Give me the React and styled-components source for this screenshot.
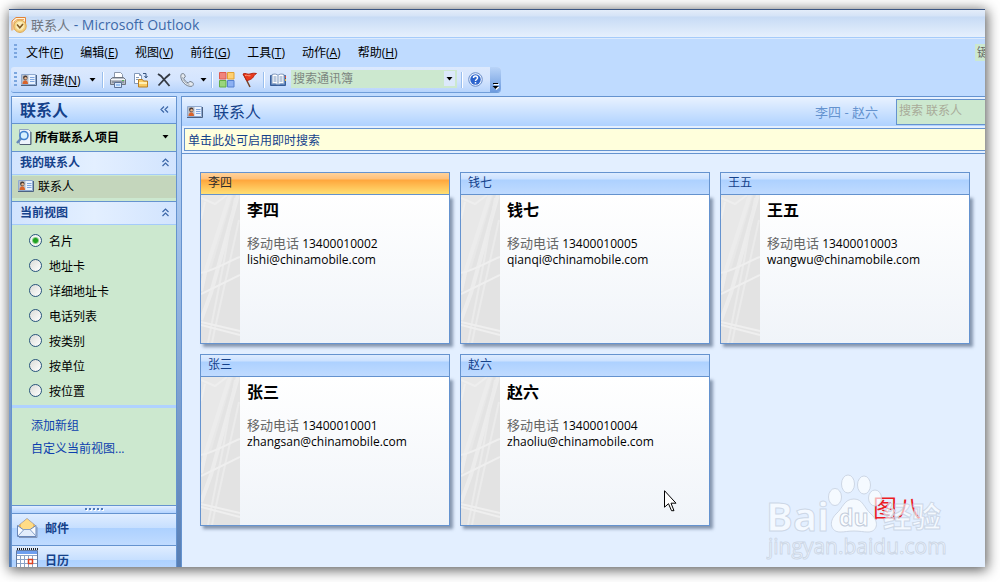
import React, { useState } from "react";
import styled, { createGlobalStyle } from "styled-components";

const GlobalStyle = createGlobalStyle`
  * {
    box-sizing: border-box;
  }
  body {
    margin: 0;
    background: #fff;
    font-family: "Open Sans", "Noto Sans CJK SC", sans-serif;
    font-size: 12px;
    color: #000;
  }
  button, input {
    font: inherit;
    color: inherit;
    border: 0;
    padding: 0;
    margin: 0;
    background: none;
  }
  svg {
    display: block;
    flex: none;
  }
`;

const Page = styled.div`
  height: 100vh;
  padding: 9px 15px 15px 9px;
`;

const Window = styled.div`
  position: relative;
  display: flex;
  flex-direction: column;
  height: 100%;
  background: #bfdbff;
  border-top: 1px solid #3b5683;
  box-shadow: 1px 2px 12px 1px rgba(0, 0, 0, 0.65);
`;

const TitleBar = styled.header`
  display: flex;
  align-items: center;
  gap: 4px;
  height: 28px;
  padding: 2px 2px 0;
  background: linear-gradient(#e4edfa 0, #d5e3f7 6px, #c7dbf5 7px, #e6f0fd 100%);
  border-bottom: 1px solid #a5cbfa;
  color: #3e6aaa;
  font-size: 14px;
  span {
    color: #6f7681;
    font-size: 13px;
  }
`;

const MenuBar = styled.nav`
  display: flex;
  align-items: center;
  gap: 1px;
  height: 29px;
  padding: 0 0 2px 5px;
  border-top: 1px solid #dceafd;
`;

const MenuButton = styled.button`
  padding: 0 8px;
`;

const Grip = styled.span`
  width: 3px;
  height: 16px;
  background: repeating-linear-gradient(#7ba6df 0 2px, transparent 2px 4px);
`;

const QuestionBox = styled.input`
  width: 10px;
  height: 17px;
  margin-left: auto;
  padding-left: 2px;
  background: #cce8cf;
  &::placeholder {
    color: #666;
  }
`;

const ToolBar = styled.div`
  display: flex;
  align-items: center;
  align-self: flex-start;
  height: 26px;
  margin: 0 0 3px 2px;
  padding-left: 3px;
  background: linear-gradient(#dce9fd, #d5e5fe 50%, #b7d4fc);
  border-bottom: 1px solid #6f9dd9;
  border-radius: 3px 4px 4px 3px;
`;

const ToolButton = styled.button`
  display: flex;
  align-items: center;
  justify-content: center;
  gap: 3px;
  min-width: ${props => props.$width || 23}px;
  height: 22px;
`;

const Separator = styled.span`
  width: 2px;
  height: 16px;
  margin: 0 2px;
  border-left: 1px solid #9abfee;
  border-right: 1px solid #fff;
`;

const Combo = styled.div`
  display: flex;
  align-items: center;
  width: 166px;
  height: 18px;
  margin: 0 2px 2px 3px;
  padding: 1px 2px;
  background: #cce8cf;
  input {
    flex: 1;
    min-width: 0;
    height: 16px;
  }
  input::placeholder {
    color: #7c8680;
  }
  button {
    display: flex;
    align-items: center;
    justify-content: center;
    width: 11px;
    height: 15px;
    background: #dce9fb;
  }
`;

const ToolEnd = styled.button`
  display: flex;
  align-items: flex-end;
  justify-content: center;
  width: 11px;
  height: 25px;
  margin-left: 4px;
  padding-bottom: 2px;
  background: linear-gradient(#b9d4f8, #6c9ade);
  border-radius: 0 4px 4px 0;
`;

const Body = styled.div`
  display: flex;
  flex: 1;
  gap: 4px;
  min-height: 0;
  padding-left: 2px;
  overflow: hidden;
  background: linear-gradient(#bfdbff, #577eb4);
`;

/* the last navigation button runs past the bottom of the window */
const Sidebar = styled.aside`
  display: flex;
  flex-direction: column;
  width: 166px;
  margin-bottom: -11px;
  border: 1px solid #6593cf;
  background: #cce8cf;
`;

const SideTitle = styled.div`
  display: flex;
  align-items: center;
  justify-content: space-between;
  height: 27px;
  padding: 0 7px 3px 8px;
  background: linear-gradient(#e3efff, #afd2ff);
  border-bottom: 1px solid #6593cf;
  border-top: 1px solid #fff;
  color: #15428b;
  font-size: 16px;
  font-weight: 700;
`;

const ScopeButton = styled.button`
  display: flex;
  align-items: center;
  gap: 3px;
  height: 28px;
  padding: 0 7px 2px 4px;
  border-bottom: 1px solid #6593cf;
  font-weight: 700;
  svg:last-child {
    margin-left: auto;
  }
`;

const Section = styled.div`
  display: flex;
  align-items: center;
  justify-content: space-between;
  height: 23px;
  padding: 0 6px 2px 8px;
  background: linear-gradient(90deg, #d2e4fe, #e3efff 50%, #d2e4fe);
  border-bottom: 1px solid #a5cbfa;
  color: #15428b;
  font-weight: 700;
`;

const Folder = styled.a`
  display: flex;
  align-items: center;
  gap: 4px;
  height: 22px;
  margin: 1px 0 3px;
  padding: 0 0 2px 6px;
  background: #c4d6bc;
  color: #000;
  text-decoration: none;
`;

const Line = styled.div`
  height: ${props => props.$size || 1}px;
  background: ${props => props.$color || "#6593cf"};
`;

const Views = styled.div`
  padding: 3px 0 2px 17px;
`;

const View = styled.label`
  display: flex;
  align-items: center;
  gap: 7px;
  height: 25px;
`;

const Radio = styled.input.attrs({ type: "radio" })`
  appearance: none;
  width: 13px;
  height: 13px;
  border: 1px solid #28537c;
  border-radius: 50%;
  background: linear-gradient(135deg, #dcdcd8, #fff);
  &:checked {
    background: radial-gradient(circle, #21a121 0 2px, #8ccf8a 3px, #f4f6f2 4px);
  }
`;

const SideLinks = styled.div`
  flex: 1;
  padding: 6px 0 0 19px;
  a {
    display: block;
    line-height: 23px;
    color: #0d3fae;
    text-decoration: none;
  }
`;

const Splitter = styled.div`
  display: flex;
  align-items: center;
  justify-content: center;
  height: 8px;
  background: linear-gradient(#e3efff, #b3d3ff);
  border-top: 1px solid #6593cf;
`;

const NavButton = styled.button`
  display: flex;
  align-items: center;
  gap: 6px;
  height: 32px;
  padding: 0 0 4px 4px;
  background: linear-gradient(#e0edff, #c6dfff 45%, #add1ff 46%, #c0dbff);
  border-top: 1px solid #6593cf;
  color: #15428b;
  font-weight: 700;
`;

const Main = styled.main`
  position: relative;
  display: flex;
  flex: 1;
  flex-direction: column;
  min-width: 0;
  background: #e3efff;
  border: solid #6593cf;
  border-width: 1px 0 0 1px;
`;

const MainHeader = styled.div`
  display: flex;
  align-items: center;
  height: 29px;
  padding-left: 5px;
  background: linear-gradient(#e9f2ff, #afd2ff);
  h1 {
    flex: 1;
    margin: 0 0 2px 10px;
    color: #15428b;
    font-size: 16px;
    font-weight: 400;
  }
`;

const Range = styled.span`
  color: #6593cf;
  font-size: 13px;
`;

const SearchBox = styled.input`
  width: 89px;
  height: 26px;
  margin-left: 18px;
  padding: 0 2px 2px;
  background: #cce8cf;
  border: solid #6593cf;
  border-width: 1px 0 1px 1px;
  &::placeholder {
    color: #a9ab99;
  }
`;

const Notice = styled.button`
  height: 23px;
  margin: 2px 0 2px 2px;
  padding-left: 3px;
  background: #ffffdc;
  border: solid #6593cf;
  border-width: 1px 0 1px 1px;
  color: #15428b;
  text-align: left;
`;

const Cards = styled.div`
  display: grid;
  grid-template-columns: repeat(auto-fill, 250px);
  gap: 10px;
  padding: 18px 0 0 18px;
`;

const Card = styled.article`
  display: flex;
  flex-direction: column;
  height: 172px;
`;

const CardTitle = styled.div`
  height: 23px;
  padding-left: 7px;
  line-height: 19px;
  border: 1px solid #6593cf;
  color: ${props => (props.$active ? "#2b2b2b" : "#15428b")};
  background: ${props =>
    props.$active
      ? "linear-gradient(#ffd29b, #ffc07a 6px, #ffa63c 7px, #ffdf74)"
      : "linear-gradient(#deecff, #cbe1ff 6px, #add1ff 7px, #c0dbff)"};
`;

const CardBody = styled.div`
  display: flex;
  flex: 1;
  gap: 7px;
  background: linear-gradient(#fff, #f0f4f9);
  border: solid #6593cf;
  border-width: 0 1px 1px;
  box-shadow: 3px 3px 3px rgba(70, 90, 120, 0.6);
`;

const CardText = styled.div`
  padding-top: 3px;
  h2 {
    margin: 0 0 13px;
    font-size: 16px;
    line-height: 24px;
  }
  p {
    margin: 0;
    line-height: 16px;
  }
  span {
    color: #666;
    font-size: 13px;
  }
`;

const Pointer = styled.div`
  position: absolute;
  right: 308px;
  bottom: 55px;
`;

const Watermark = styled.div`
  position: absolute;
  right: 35px;
  bottom: 4px;
`;

const ContactIcon = () => (
  <svg width="16" height="14" viewBox="0 0 16 14">
    <path d="M.5 1.5h14v10H.5z" fill="#e9f2ff" stroke="#8fa9cf" />
    <path d="M0 12.5h15.500V2" fill="none" stroke="#4c6283" />
    <path d="M1 2h6.500v9H1z" fill="#b9bfc8" />
    <circle cx="4.300" cy="4.700" r="2.200" fill="#4a3a35" />
    <circle cx="4.600" cy="5.200" r="1.200" fill="#e9b48a" />
    <path d="M1.500 11c0-5 5.500-5 5.500 0z" fill="#d9632b" />
    <path d="M9 4.500h4.500M9 6.500h4.500M9 8.500h4.500" stroke="#7fa6df" />
  </svg>
);

const AppIcon = () => (
  <svg width="16" height="16" viewBox="0 0 16 16">
    <path d="M1 13.500V4l4-3.500h9.500V7" fill="#fff3d5" stroke="#e0823a" />
    <path d="M3 13V5l3-2.500h7" fill="none" stroke="#eda76c" />
    <circle cx="9" cy="9.200" r="6.200" fill="#f6cf7c" stroke="#dba650" />
    <circle cx="9" cy="8.800" r="4.600" fill="#fdeeb9" stroke="#f4d68a" />
    <path d="M6 7.500l2.800 3.200L12 7" fill="none" stroke="#815a25" strokeWidth="1.600" />
  </svg>
);

const DownArrow = () => (
  <svg width="7" height="4" viewBox="0 0 7 4">
    <path d="M.5 0h6L3.500 3.500z" fill="#000" />
  </svg>
);

const PrinterIcon = () => (
  <svg width="16" height="16" viewBox="0 0 16 16">
    <path d="M4.500 6V.500h6l2 2V6" fill="#fff" stroke="#8b97ab" />
    <path d="M.5 7.500l2-2h11l2 2v5H.500z" fill="#b8bec8" stroke="#6e7580" />
    <path d="M1 7.500h14" stroke="#f4f6f8" />
    <path d="M2 10h12" stroke="#66707e" />
    <path d="M4.500 10.500h7v5h-7z" fill="#d8e9ff" stroke="#5c7297" />
    <path d="M6 13h4" stroke="#5a9be6" />
    <path d="M12 8.500h2" stroke="#52b452" />
  </svg>
);

const MoveIcon = () => (
  <svg width="16" height="16" viewBox="0 0 16 16">
    <path d="M1.500 1.500h5l2 2v8h-7z" fill="#fff" stroke="#8298b8" />
    <path d="M6.500 1.500v2h2M3 5.500h3M3 7.500h2" fill="none" stroke="#8298b8" />
    <path d="M10 1.500h3v4M11.500 4l1.500 2 1.500-2" fill="none" stroke="#375683" />
    <path d="M5.500 7.500h4l1 1.500h4v6h-9z" fill="#f9cb62" stroke="#b77e25" />
    <path d="M6 11h8" stroke="#ffefb4" strokeWidth="2" />
  </svg>
);

const DeleteIcon = () => (
  <svg width="14" height="14" viewBox="0 0 14 14">
    <path d="M1 1l3 2 8.500 10M13 1L9 4.500 1.500 12.500" fill="none" stroke="#343a43" strokeWidth="1.800" />
  </svg>
);

const PhoneIcon = () => (
  <svg width="14" height="14" viewBox="0 0 14 14">
    <path
      d="M1 1.500C2 .3 4 .4 4.600 1.500l.7 2.300-1.600 1.400c.6 2.200 2.500 4 4.600 4.700l1.700-1.500 2.600 1c1.200.9.9 3-.4 3.800C6.500 14.700-.5 7.500 1 1.500z"
      fill="#e5eaf0"
      stroke="#77818e"
    />
    <path d="M2.500 4c.4 3.500 3 6.500 7 7.500" fill="none" stroke="#a9b3bf" />
  </svg>
);

const CategoryIcon = () => (
  <svg width="16" height="16" viewBox="0 0 16 16">
    <path d="M.5.500h6.500v6.500H.500z" fill="#f0857c" stroke="#de5a50" />
    <path d="M8.500.500h6.500v6.500H8.500z" fill="#ffd070" stroke="#e0a233" />
    <path d="M.5 8.500h6.500v6.500H.500z" fill="#9ad67c" stroke="#63ad45" />
    <path d="M8.500 8.500h6.500v6.500H8.500z" fill="#8db1f3" stroke="#5580cf" />
  </svg>
);

const FlagIcon = () => (
  <svg width="16" height="16" viewBox="0 0 16 16">
    <path d="M1.500 2L8 15" stroke="#71462c" strokeWidth="1.500" />
    <path d="M1 2c3-1.500 4 1 7 0s4-.8 6.500-.5c-2.500 1.200-2.500 3-4 4.500s-3 1.500-5.500 3z" fill="#ea3a1e" stroke="#b52411" />
    <path d="M3 3.500c2-.8 3 .8 5.500.2" fill="none" stroke="#ff9c79" />
  </svg>
);

const BookIcon = () => (
  <svg width="16" height="14" viewBox="0 0 16 14">
    <path d="M.5 2.500h15v10H.500z" fill="#527bb8" stroke="#375d99" />
    <path d="M2 1.500c3-1 5-.2 6 .8 1-1 3-1.800 6-.8v9.500c-3-.8-5 0-6 1-1-1-3-1.800-6-1z" fill="#fff" stroke="#7f98be" />
    <path d="M8 2.500V12M3.500 4h3M3.500 6h3M3.500 8h3M9.500 4h3M9.500 6h3M9.500 8h3" stroke="#7391bd" />
    <path d="M15.500 3v2" stroke="#e24a33" />
    <path d="M15.500 6v2" stroke="#f0bd39" />
  </svg>
);

const HelpIcon = () => (
  <svg width="15" height="15" viewBox="0 0 15 15">
    <circle cx="7.500" cy="7.500" r="6.800" fill="#e8f1ff" stroke="#6b8ec9" />
    <circle cx="7.500" cy="7.500" r="5.200" fill="#2c64cd" />
    <path d="M5.500 6c0-2.700 4-2.700 4 0 0 1.500-2 1.500-2 3M7.500 10v1.500" fill="none" stroke="#fff" strokeWidth="1.500" />
  </svg>
);

const MoreIcon = () => (
  <svg width="7" height="7" viewBox="0 0 7 7">
    <path d="M1 .5h5" stroke="#000" />
    <path d="M2 1.500h5" stroke="#fff" />
    <path d="M1.500 4h6L4.500 7z" fill="#fff" />
    <path d="M.5 3h6l-3 3z" fill="#000" />
  </svg>
);

const FindIcon = () => (
  <svg width="16" height="16" viewBox="0 0 16 16">
    <path d="M3.500.500h9l2 2v13h-11z" fill="#edf3fc" stroke="#8fa3c1" />
    <path d="M15 3v12.500H4" fill="none" stroke="#4e5c72" />
    <path d="M1 14l4.500-5" stroke="#6489b9" strokeWidth="2.500" />
    <circle cx="8" cy="6.500" r="4" fill="#d5f0ff" stroke="#3f80ce" strokeWidth="1.600" />
  </svg>
);

const Chevrons = ({ up }) => (
  <svg width="9" height="9" viewBox="0 0 9 9">
    <path
      d={up ? "M1.500 4L4.500 1l3 3M1.500 8L4.500 5l3 3" : "M4 1.500L1 4.500l3 3M8 1.500L5 4.500l3 3"}
      fill="none"
      stroke="#3c67a8"
      strokeWidth="1.200"
    />
  </svg>
);

const Dots = () => (
  <svg width="19" height="4" viewBox="0 0 19 4">
    <path d="M1 2h18" stroke="#fff" strokeWidth="2" strokeDasharray="2 2" />
    <path d="M0 1h18" stroke="#4d79b8" strokeWidth="2" strokeDasharray="2 2" />
  </svg>
);

const MailIcon = () => (
  <svg width="23" height="22" viewBox="0 0 23 22">
    <path d="M2.500 8.500L11 1.500l8.500 7v11h-17z" fill="#f4bc54" stroke="#a6a6b2" />
    <path d="M5 7l6-5 6 5v7H5z" fill="#ffdc86" />
    <path d="M1.500 8.500l9 6.500 9.500-6.500v11H1.500z" fill="#f8fbff" stroke="#6886b8" />
    <path d="M2 19l6-6.500h6l6 6.500" fill="#e3edfb" stroke="#849fc8" />
    <path d="M3 20.500h18V10" fill="none" stroke="#8296b9" />
  </svg>
);

const CalendarIcon = () => (
  <svg width="23" height="23" viewBox="0 0 23 23">
    <path d="M.5 2.500h21v20H.500z" fill="#fff" stroke="#647a9e" />
    <path d="M1 3h20v3H1z" fill="#6e9ff0" />
    <path d="M1 1h21" stroke="#222" strokeWidth="2" strokeDasharray="1 1" />
    <path d="M1 7.500h20M1 11.500h20M1 15.500h20M1 19.500h20M4.500 7v15M8.500 7v15M12.500 7v15M16.500 7v15" stroke="#8ba2c5" />
    <path d="M12.500 11.500h4v4h-4z" fill="#fff" stroke="#e0401f" strokeWidth="1.500" />
  </svg>
);

const CardStrip = () => (
  <svg width="39" height="148" viewBox="0 0 39 148">
    <path d="M0 0h39v148H0z" fill="#e3e3e3" />
    <path d="M0 0h32L10 75 0 78z" fill="#e8e8e8" />
    <path d="M0 3l14 6L26 0M4 7L0 24" fill="none" stroke="#eeeeee" strokeWidth="2" />
    <path d="M29 0L4 78 0 96M37 0L10 98 0 125" fill="none" stroke="#ececec" strokeWidth="4" />
    <path d="M34 3L23 66 7 148M38 25L13 138 11 148" fill="none" stroke="#ebebeb" strokeWidth="2" />
    <path d="M0 78C14 75 26 67 39 62M0 99l39-19M0 127l39 9M0 130l39 10" fill="none" stroke="#efefef" strokeWidth="2" />
  </svg>
);

const menus = [
  ["文件", "F"],
  ["编辑", "E"],
  ["视图", "V"],
  ["前往", "G"],
  ["工具", "T"],
  ["动作", "A"],
  ["帮助", "H"]
];

const views = ["名片", "地址卡", "详细地址卡", "电话列表", "按类别", "按单位", "按位置"];

const contacts = [
  { name: "李四", phone: "13400010002", email: "lishi@chinamobile.com" },
  { name: "钱七", phone: "13400010005", email: "qianqi@chinamobile.com" },
  { name: "王五", phone: "13400010003", email: "wangwu@chinamobile.com" },
  { name: "张三", phone: "13400010001", email: "zhangsan@chinamobile.com" },
  { name: "赵六", phone: "13400010004", email: "zhaoliu@chinamobile.com" }
];

const ContactCard = props => {
  return (
    <Card>
      <CardTitle $active={props.active}>{props.name}</CardTitle>
      <CardBody>
        <CardStrip />
        <CardText>
          <h2>{props.name}</h2>
          <p>
            <span>移动电话</span> {props.phone}
          </p>
          <p>{props.email}</p>
        </CardText>
      </CardBody>
    </Card>
  );
};

const Tools = () => {
  return (
    <ToolBar>
      <Grip />
      <ToolButton $width={68}>
        <ContactIcon />
        <span>
          新建(<u>N</u>)
        </span>
      </ToolButton>
      <ToolButton $width={15} aria-label="新建选项">
        <DownArrow />
      </ToolButton>
      <Separator />
      <ToolButton aria-label="打印">
        <PrinterIcon />
      </ToolButton>
      <ToolButton aria-label="移动">
        <MoveIcon />
      </ToolButton>
      <ToolButton aria-label="删除">
        <DeleteIcon />
      </ToolButton>
      <ToolButton aria-label="呼叫">
        <PhoneIcon />
      </ToolButton>
      <ToolButton $width={11} aria-label="呼叫选项">
        <DownArrow />
      </ToolButton>
      <Separator />
      <ToolButton aria-label="分类">
        <CategoryIcon />
      </ToolButton>
      <ToolButton aria-label="后续标志">
        <FlagIcon />
      </ToolButton>
      <Separator />
      <ToolButton $width={21} aria-label="通讯簿">
        <BookIcon />
      </ToolButton>
      <Combo>
        <input placeholder="搜索通讯簿" aria-label="搜索通讯簿" />
        <button aria-label="最近搜索">
          <DownArrow />
        </button>
      </Combo>
      <Separator />
      <ToolButton $width={21} aria-label="帮助">
        <HelpIcon />
      </ToolButton>
      <ToolEnd aria-label="工具栏选项">
        <MoreIcon />
      </ToolEnd>
    </ToolBar>
  );
};

const Navigation = () => {
  const [view, setView] = useState("名片");

  return (
    <Sidebar>
      <SideTitle>
        联系人
        <Chevrons />
      </SideTitle>
      <ScopeButton>
        <FindIcon />
        所有联系人项目
        <DownArrow />
      </ScopeButton>
      <Section>
        我的联系人
        <Chevrons up />
      </Section>
      <Folder href="#contacts">
        <ContactIcon />
        联系人
      </Folder>
      <Line />
      <Section>
        当前视图
        <Chevrons up />
      </Section>
      <Views>
        {views.map(name => (
          <View key={name}>
            <Radio name="view" checked={view === name} onChange={() => setView(name)} />
            {name}
          </View>
        ))}
      </Views>
      <Line $size={3} $color="#afd2ff" />
      <SideLinks>
        <a href="#group">添加新组</a>
        <a href="#customize">自定义当前视图...</a>
      </SideLinks>
      <Splitter>
        <Dots />
      </Splitter>
      <NavButton>
        <MailIcon />
        邮件
      </NavButton>
      <NavButton>
        <CalendarIcon />
        日历
      </NavButton>
    </Sidebar>
  );
};

const Logo = () => (
  <Watermark>
    <svg width="184" height="92" viewBox="0 0 184 92">
      <text x="107" y="46" fontSize="24" fill="#ec1c24" fontFamily="Noto Sans CJK SC, sans-serif">图八</text>
      <g
        fill="#fff"
        fillOpacity="0.65"
        stroke="#c5d0df"
        strokeOpacity="0.8"
        fontFamily="Open Sans, Noto Sans CJK SC, sans-serif"
      >
        <text x="0" y="60" fontSize="40" fontWeight="700">Bai</text>
        <ellipse cx="69" cy="26" rx="6.500" ry="8.500" />
        <ellipse cx="82" cy="13" rx="6.500" ry="9" />
        <ellipse cx="98" cy="14" rx="6.500" ry="9" />
        <ellipse cx="109" cy="27" rx="6.500" ry="8" />
        <path d="M88 28c9 0 10 9 17 15 9 8 6 18-3 18-5 0-8-1-14-1s-9 1-14 1c-9 0-12-10-4-18 7-6 8-15 18-15z" />
        <text x="117" y="57" fontSize="29" fontWeight="700">经验</text>
        <text x="2" y="83" fontSize="21">jingyan.baidu.com</text>
        <text x="73" y="55" fontSize="23" fontWeight="700" stroke="#b4c0d2">du</text>
      </g>
    </svg>
  </Watermark>
);

export default function App() {
  return (
    <Page>
      <GlobalStyle />
      <Window>
        <TitleBar>
          <AppIcon />
          <div>
            <span>联系人</span> - Microsoft Outlook
          </div>
        </TitleBar>
        <MenuBar>
          <Grip />
          {menus.map(([label, key]) => (
            <MenuButton key={key}>
              {label}(<u>{key}</u>)
            </MenuButton>
          ))}
          <QuestionBox placeholder="键" aria-label="键入需要帮助的问题" />
        </MenuBar>
        <Tools />
        <Body>
          <Navigation />
          <Main>
            <MainHeader>
              <ContactIcon />
              <h1>联系人</h1>
              <Range>李四 - 赵六</Range>
              <SearchBox placeholder="搜索 联系人" aria-label="搜索 联系人" />
            </MainHeader>
            <Notice>单击此处可启用即时搜索</Notice>
            <Line />
            <Cards>
              {contacts.map((contact, index) => (
                <ContactCard key={contact.name} active={index === 0} {...contact} />
              ))}
            </Cards>
            <Logo />
            <Pointer>
              <svg width="13" height="22" viewBox="0 0 13 22">
                <path d="M.5.700v16.500l4-3.500 3 7h2.500l-3-7.500h5z" fill="#fff" stroke="#000" />
              </svg>
            </Pointer>
          </Main>
        </Body>
      </Window>
    </Page>
  );
}
